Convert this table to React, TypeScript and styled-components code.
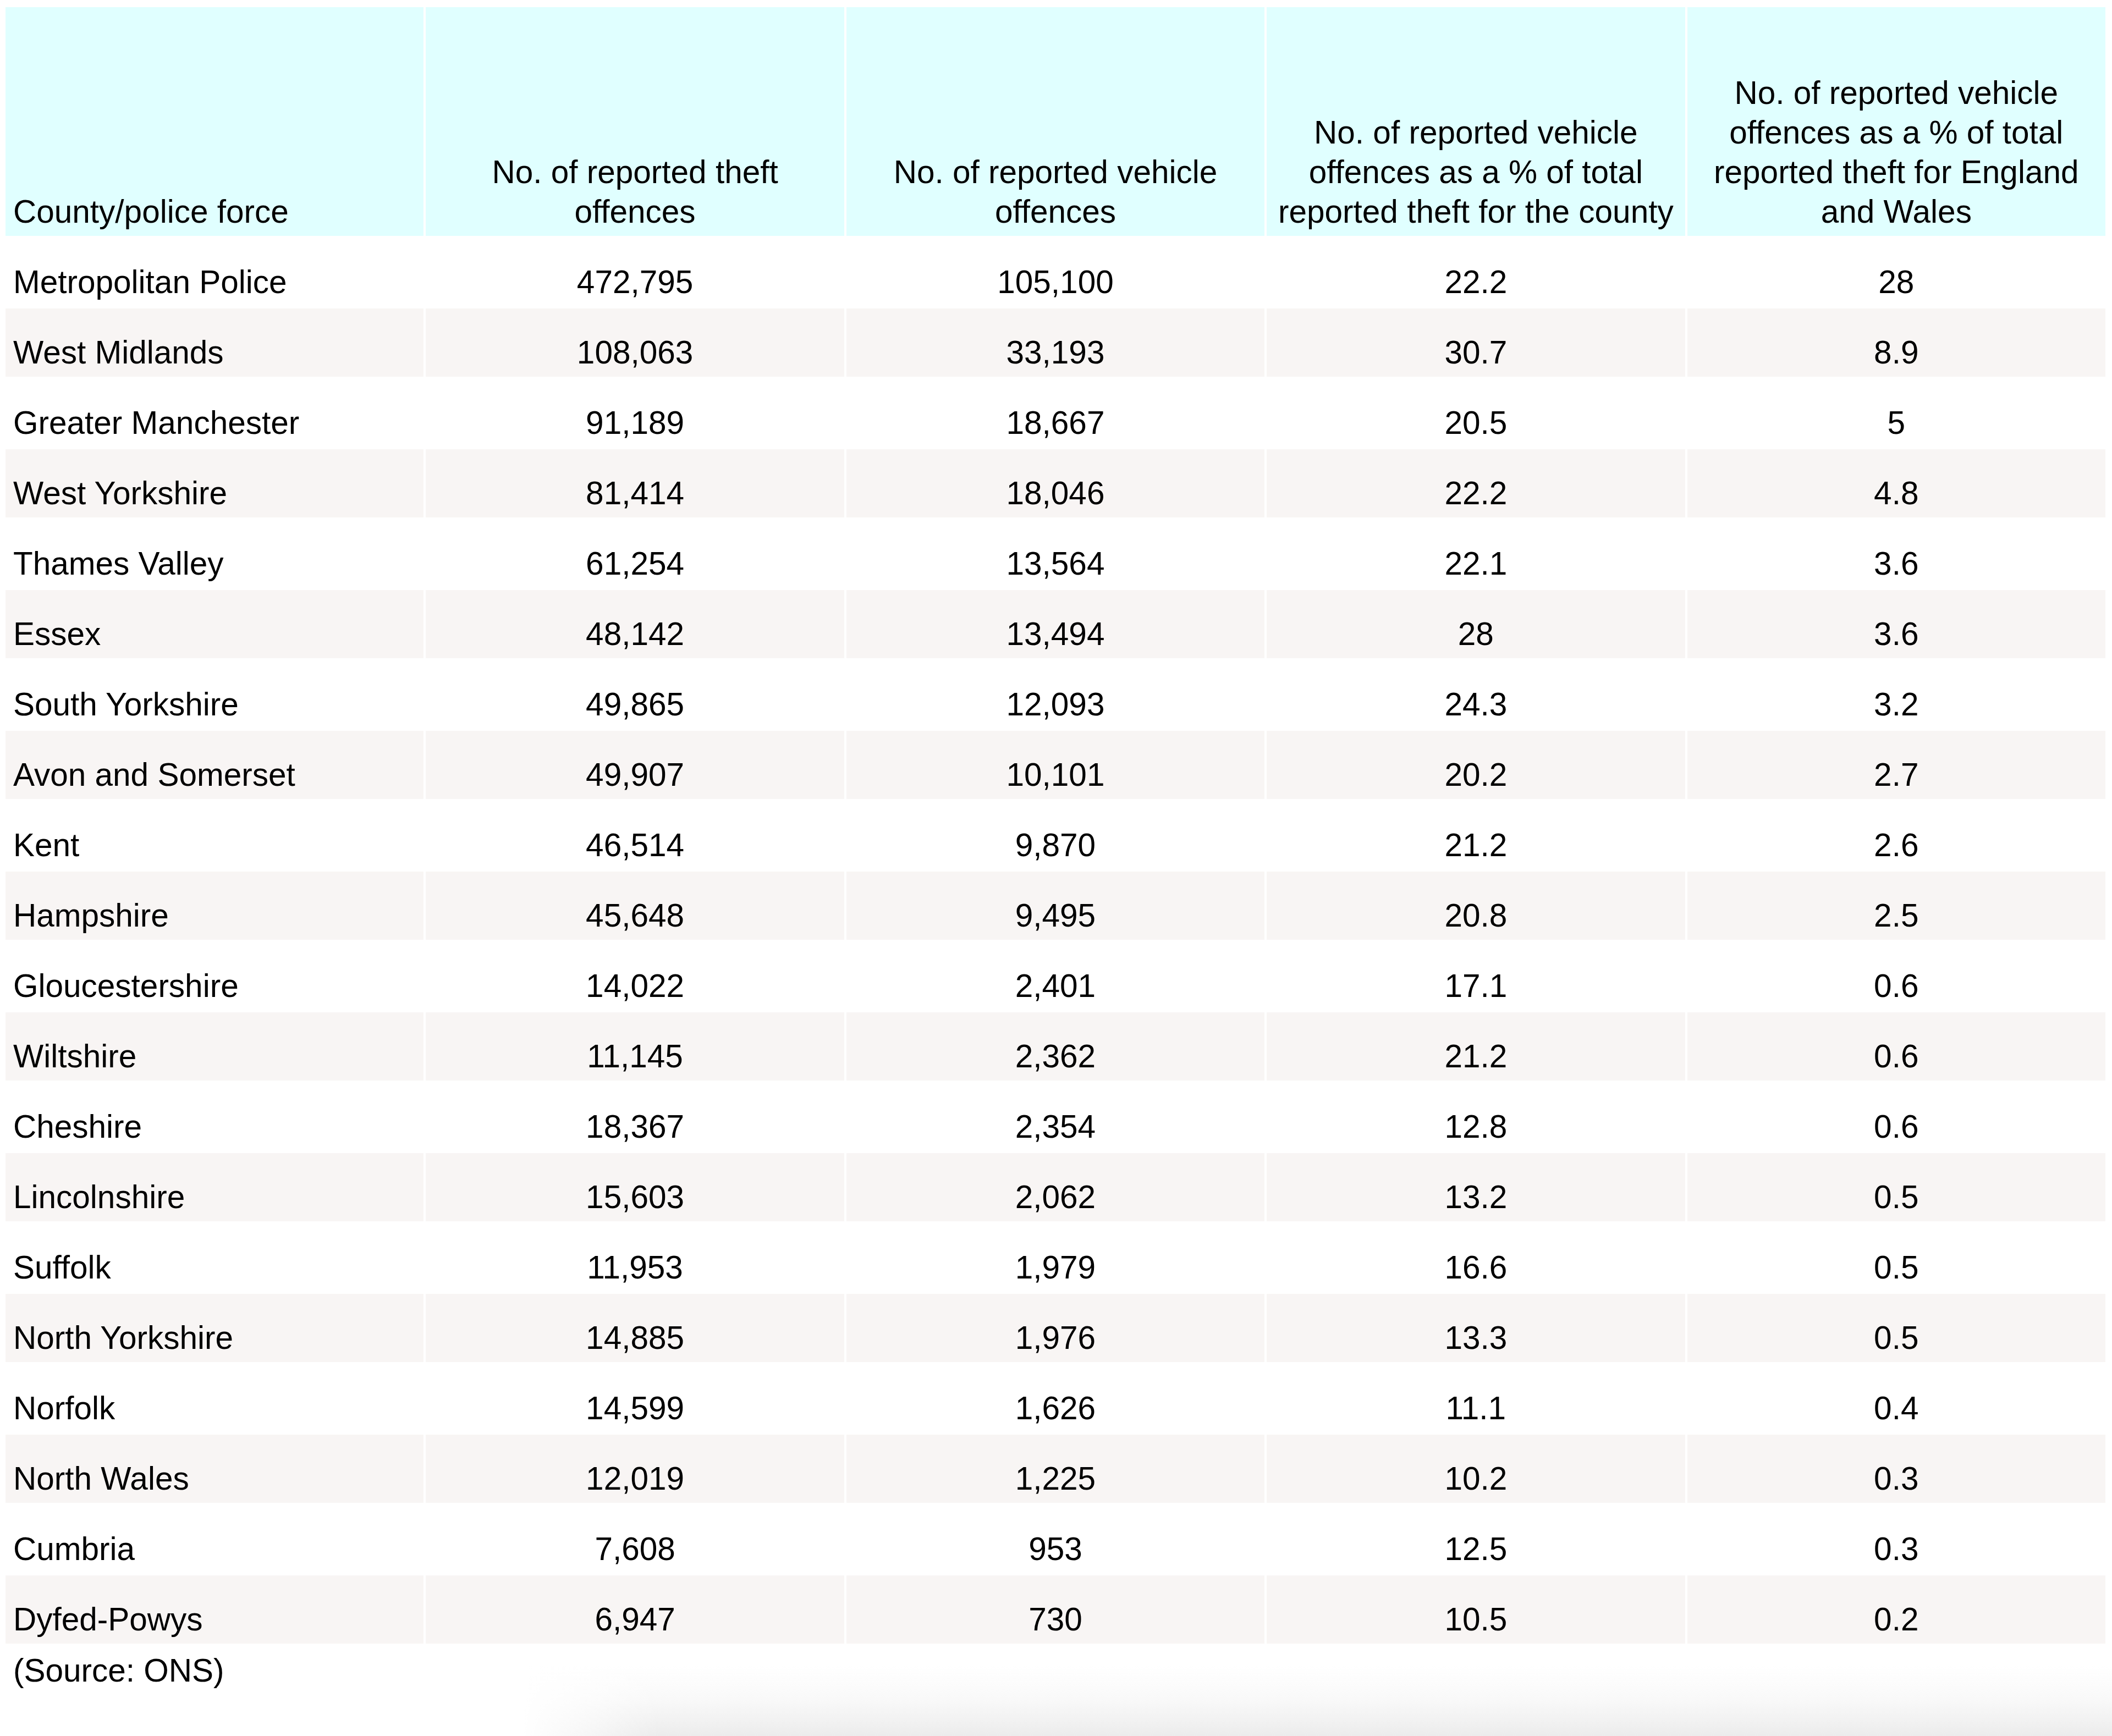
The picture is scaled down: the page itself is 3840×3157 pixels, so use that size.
import styled, { createGlobalStyle } from "styled-components";

const GlobalStyle = createGlobalStyle`
  html {
    height: 100%;
    background-color: #fff;
    background-image:
      linear-gradient(to right, #fff 950px, rgba(255, 255, 255, 0) 1200px),
      linear-gradient(to bottom, #fff 3030px, #f9f9f9 3090px, #ececec 3157px);
    background-repeat: no-repeat;
    background-size: 100% 3157px;
  }
  body {
    margin: 0;
    font-family: "Liberation Sans", Arial, Helvetica, sans-serif;
    color: #000;
  }
`;

const Page = styled.div`
  padding: 9px 8px 0 6px;
`;

const Table = styled.table`
  width: 100%;
  table-layout: fixed;
  border-collapse: separate;
  border-spacing: 4px;
  font-size: 58.5px;
  line-height: 72px;
`;

const HeadRow = styled.tr`
  height: 416px;
  background: #e0ffff;
`;

const Row = styled.tr<{ $striped: boolean }>`
  height: 124px;
  background: ${(p) => (p.$striped ? "#f8f5f4" : "#fff")};
`;

const HeadCell = styled.th<{ $left?: boolean }>`
  font-weight: normal;
  vertical-align: bottom;
  padding: 0 10px 8px ${(p) => (p.$left ? "14px" : "10px")};
  text-align: ${(p) => (p.$left ? "left" : "center")};
`;

const Cell = styled.td<{ $left?: boolean }>`
  vertical-align: bottom;
  padding: 0 10px 8px ${(p) => (p.$left ? "14px" : "10px")};
  white-space: nowrap;
  text-align: ${(p) => (p.$left ? "left" : "center")};
`;

const Source = styled.p`
  margin: 9px 0 0 18px;
  font-size: 58.5px;
  line-height: 72px;
`;

const rows: [string, string, string, string, string][] = [
  ["Metropolitan Police", "472,795", "105,100", "22.2", "28"],
  ["West Midlands", "108,063", "33,193", "30.7", "8.9"],
  ["Greater Manchester", "91,189", "18,667", "20.5", "5"],
  ["West Yorkshire", "81,414", "18,046", "22.2", "4.8"],
  ["Thames Valley", "61,254", "13,564", "22.1", "3.6"],
  ["Essex", "48,142", "13,494", "28", "3.6"],
  ["South Yorkshire", "49,865", "12,093", "24.3", "3.2"],
  ["Avon and Somerset", "49,907", "10,101", "20.2", "2.7"],
  ["Kent", "46,514", "9,870", "21.2", "2.6"],
  ["Hampshire", "45,648", "9,495", "20.8", "2.5"],
  ["Gloucestershire", "14,022", "2,401", "17.1", "0.6"],
  ["Wiltshire", "11,145", "2,362", "21.2", "0.6"],
  ["Cheshire", "18,367", "2,354", "12.8", "0.6"],
  ["Lincolnshire", "15,603", "2,062", "13.2", "0.5"],
  ["Suffolk", "11,953", "1,979", "16.6", "0.5"],
  ["North Yorkshire", "14,885", "1,976", "13.3", "0.5"],
  ["Norfolk", "14,599", "1,626", "11.1", "0.4"],
  ["North Wales", "12,019", "1,225", "10.2", "0.3"],
  ["Cumbria", "7,608", "953", "12.5", "0.3"],
  ["Dyfed-Powys", "6,947", "730", "10.5", "0.2"],
];

export default function App() {
  return (
    <>
      <GlobalStyle />
      <Page>
        <Table>
          <thead>
            <HeadRow>
              <HeadCell $left>County/police force</HeadCell>
              <HeadCell>
                No. of reported theft
                <br />
                offences
              </HeadCell>
              <HeadCell>
                No. of reported vehicle
                <br />
                offences
              </HeadCell>
              <HeadCell>
                No. of reported vehicle
                <br />
                offences as a % of total
                <br />
                reported theft for the county
              </HeadCell>
              <HeadCell>
                No. of reported vehicle
                <br />
                offences as a % of total
                <br />
                reported theft for England
                <br />
                and Wales
              </HeadCell>
            </HeadRow>
          </thead>
          <tbody>
            {rows.map((r, i) => (
              <Row key={r[0]} $striped={i % 2 === 1}>
                <Cell $left>{r[0]}</Cell>
                <Cell>{r[1]}</Cell>
                <Cell>{r[2]}</Cell>
                <Cell>{r[3]}</Cell>
                <Cell>{r[4]}</Cell>
              </Row>
            ))}
          </tbody>
        </Table>
        <Source>(Source: ONS)</Source>
      </Page>
    </>
  );
}
